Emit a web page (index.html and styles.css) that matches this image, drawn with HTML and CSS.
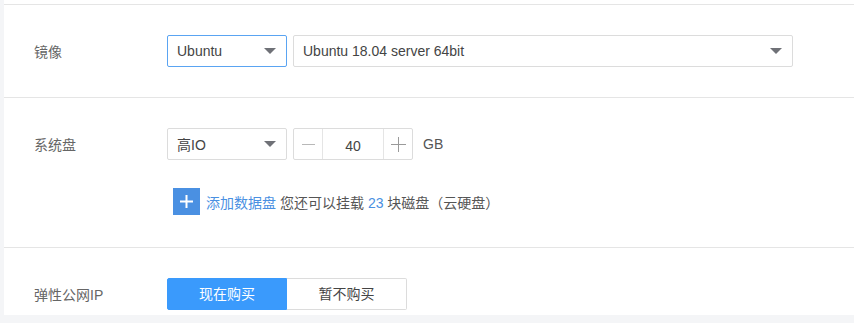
FILE: index.html
```html
<!DOCTYPE html>
<html lang="zh-CN">
<head>
    <meta charset="UTF-8">
    <title>配置</title>
    <link rel="stylesheet" href="styles.css">
</head>
<body>
    <div class="panel">
        <div class="section first">
            <div class="row">
                <div class="label">镜像</div>
                <div class="controls">
                    <div class="select active w120">
                        <span>Ubuntu</span>
                        <i class="caret"></i>
                    </div>
                    <div class="select w500">
                        <span>Ubuntu 18.04 server 64bit</span>
                        <i class="caret"></i>
                    </div>
                </div>
            </div>
        </div>

        <div class="section disk">
            <div class="row">
                <div class="label">系统盘</div>
                <div class="controls">
                    <div class="select w120">
                        <span>高IO</span>
                        <i class="caret"></i>
                    </div>
                    <div class="stepper">
                        <span class="step">
                            <svg width="13" height="13" viewBox="0 0 13 13"><path d="M0 6.5h13" stroke="#b8b8b8" stroke-width="1"/></svg>
                        </span>
                        <span class="value">40</span>
                        <span class="step">
                            <svg width="15" height="15" viewBox="0 0 15 15"><path d="M0 7.5h15M7.5 0v15" stroke="#9a9a9a" stroke-width="1"/></svg>
                        </span>
                    </div>
                    <span class="unit">GB</span>
                </div>
            </div>
            <div class="add-row">
                <span class="add-btn">
                    <svg width="13" height="13" viewBox="0 0 13 13"><path d="M0 6.5h13M6.5 0v13" stroke="#fff" stroke-width="2"/></svg>
                </span>
                <a class="link">添加数据盘</a>
                <span class="tip">您还可以挂载 <em>23</em> 块磁盘（云硬盘）</span>
            </div>
        </div>

        <div class="section last">
            <div class="row">
                <div class="label">弹性公网IP</div>
                <div class="controls">
                    <div class="toggle">
                        <span class="opt on">现在购买</span>
                        <span class="opt">暂不购买</span>
                    </div>
                </div>
            </div>
        </div>
    </div>
</body>
</html>
```

FILE: styles.css
```css
body {
    margin: 0;
    padding: 0;
    background-color: #f4f5f7;
    font-family: "Liberation Sans", Arial, "Noto Sans CJK SC", sans-serif;
    font-size: 14px;
    color: #444;
}
.panel {
    margin-left: 4px;
    background-color: #fff;
    padding-top: 4px;
    height: 311px;
    overflow: hidden;
}
.section {
    border-top: 1px solid #e5e5e5;
    padding: 30px 0 30px 30px;
}
.section.disk {
    padding-bottom: 32px;
}
.section.last {
    padding-bottom: 0;
}
.row {
    display: flex;
    align-items: center;
}
.label {
    width: 133px;
    color: #666;
    font-size: 14px;
}
.controls {
    display: flex;
    align-items: center;
    gap: 6px;
}
.select {
    box-sizing: border-box;
    height: 32px;
    border: 1px solid #dcdcdc;
    border-radius: 2px;
    display: flex;
    align-items: center;
    justify-content: space-between;
    padding: 0 10px 0 9px;
    color: #444;
}
.select.active {
    border-color: #5aa4f2;
}
.w120 {
    width: 120px;
}
.w500 {
    width: 500px;
}
.caret {
    width: 0;
    height: 0;
    border-left: 6px solid transparent;
    border-right: 6px solid transparent;
    border-top: 6px solid #6f7177;
}
.stepper {
    box-sizing: border-box;
    height: 32px;
    width: 120px;
    border: 1px solid #dcdcdc;
    border-radius: 2px;
    display: flex;
    align-items: center;
}
.step {
    width: 28px;
    height: 30px;
    display: flex;
    align-items: center;
    justify-content: center;
}
.value {
    flex: 1;
    height: 30px;
    line-height: 30px;
    text-align: center;
    border-left: 1px solid #e5e5e5;
    border-right: 1px solid #e5e5e5;
    color: #444;
    padding-top: 2px;
    box-sizing: border-box;
}
.unit {
    margin-left: 4px;
    color: #555;
}
.add-row {
    display: flex;
    align-items: center;
    margin: 28px 0 0 139px;
    font-size: 14px;
}
.add-btn {
    width: 27px;
    height: 27px;
    background-color: #4a90e2;
    display: flex;
    align-items: center;
    justify-content: center;
    margin-right: 6px;
}
.link {
    color: #4a90e2;
    margin-right: 4px;
}
.tip {
    color: #555;
}
.tip em {
    font-style: normal;
    color: #4a90e2;
}
.toggle {
    display: flex;
}
.opt {
    box-sizing: border-box;
    width: 120px;
    height: 32px;
    line-height: 30px;
    text-align: center;
    border: 1px solid #dcdcdc;
    color: #444;
}
.opt.on {
    background-color: #3a9afc;
    border-color: #3a9afc;
    color: #fff;
    border-radius: 2px 0 0 2px;
}
.opt + .opt {
    border-left: none;
    border-radius: 0 2px 2px 0;
}
```
